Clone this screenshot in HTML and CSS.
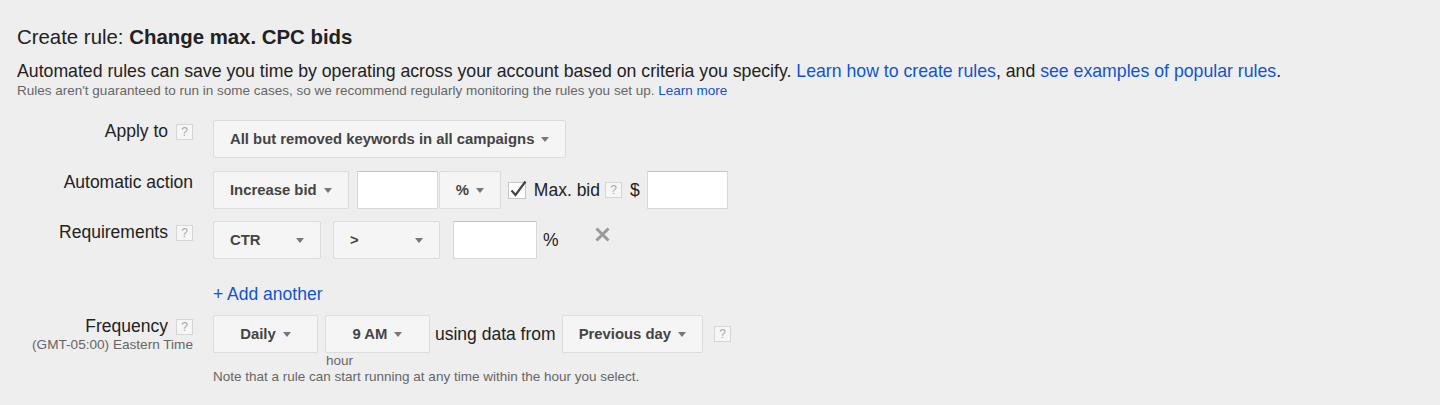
FILE: index.html
```html
<!DOCTYPE html>
<html lang="en">
<head>
<meta charset="utf-8">
<title>Create rule</title>
<link rel="stylesheet" href="styles.css">
</head>
<body>
<div class="page">
  <h1 class="title">Create rule: <b>Change max. CPC bids</b></h1>
  <p class="intro">Automated rules can save you time by operating across your account based on criteria you specify. <a href="#">Learn how to create rules</a>, and <a href="#">see examples of popular rules</a>.</p>
  <p class="note">Rules aren't guaranteed to run in some cases, so we recommend regularly monitoring the rules you set up. <a href="#">Learn more</a></p>

  <div class="form">
    <div class="row row-apply">
      <div class="label">Apply to<span class="help">?</span></div>
      <div class="controls">
        <div class="btn">All but removed keywords in all campaigns<span class="caret"></span></div>
      </div>
    </div>

    <div class="row row-action">
      <div class="label">Automatic action</div>
      <div class="controls">
        <div class="btn">Increase bid<span class="caret"></span></div>
        <div class="input w81 ml8"></div>
        <div class="btn ml1">%<span class="caret"></span></div>
        <svg class="check" width="20" height="20" viewBox="0 0 20 20">
          <rect x="0.5" y="2.5" width="17" height="16" fill="#fff" stroke="#c6c6c6"/>
          <path d="M3.5 10.5 L7.5 15 L17.5 1.5" fill="none" stroke="#444" stroke-width="2.2"/>
        </svg>
        <span class="txt maxbid">Max. bid</span><span class="help help-inline">?</span>
        <span class="txt dollar">$</span>
        <div class="input w81 ml7"></div>
      </div>
    </div>

    <div class="row row-req">
      <div class="label">Requirements<span class="help">?</span></div>
      <div class="controls">
        <div class="btn fixed w108">CTR<span class="caret"></span></div>
        <div class="btn fixed w107 ml12">&gt;<span class="caret"></span></div>
        <div class="input w84 ml13"></div>
        <span class="txt pct">%</span>
        <svg class="remove" width="15" height="15" viewBox="0 0 15 15">
          <path d="M1.5 1.5 L13.5 13.5 M13.5 1.5 L1.5 13.5" stroke="#9a9a9a" stroke-width="3"/>
        </svg>
      </div>
    </div>

    <div class="row row-add">
      <div class="label"></div>
      <div class="controls"><a href="#" class="add">+ Add another</a></div>
    </div>

    <div class="row row-freq">
      <div class="label">Frequency<span class="help">?</span><span class="tz">(GMT-05:00) Eastern Time</span></div>
      <div class="controls col">
        <div class="freq-line">
          <div class="btn center w105">Daily<span class="caret"></span></div>
          <div class="hour-col ml7">
            <div class="btn center w105">9 AM<span class="caret"></span></div>
            <span class="caption">hour</span>
          </div>
          <span class="txt using">using data from</span>
          <div class="btn ml6">Previous day<span class="caret"></span></div>
          <span class="help help-after">?</span>
        </div>
        <div class="caption">Note that a rule can start running at any time within the hour you select.</div>
      </div>
    </div>
  </div>
</div>
</body>
</html>
```

FILE: styles.css
```css
* { box-sizing: border-box; }

html, body {
  margin: 0;
  padding: 0;
  background: #eeeeee;
}

body {
  font-family: "Liberation Sans", Arial, sans-serif;
  color: #222;
}

.page {
  padding: 25px 0 0 0;
}

.title {
  margin: 0 0 0 17px;
  font-size: 20.4px;
  line-height: 24px;
  font-weight: normal;
  color: #222;
}

.title b { font-weight: bold; }

.intro {
  margin: 11px 0 0 17px;
  font-size: 17.7px;
  line-height: 22px;
  color: #222;
}

.note {
  margin: 1px 0 0 17px;
  font-size: 13.5px;
  line-height: 16px;
  color: #666;
}

a { color: #1155cc; text-decoration: none; }

.form {
  margin-top: 21px;
}

.row {
  display: flex;
  column-gap: 20px;
}

.row-action { margin-top: 13px; }
.row-req { margin-top: 12px; }
.row-add { margin-top: 24px; }
.row-freq { margin-top: 10px; }

.label {
  flex: 0 0 193px;
  text-align: right;
  font-size: 17.5px;
  line-height: 22px;
  color: #222;
}

.tz {
  display: block;
  font-size: 13.6px;
  line-height: 16px;
  color: #666;
}

.help {
  display: inline-block;
  width: 17px;
  height: 16px;
  margin-left: 8px;
  border: 1px solid #d6d6d6;
  background: #f6f6f6;
  color: #a8a8a8;
  font-size: 12px;
  line-height: 14px;
  text-align: center;
  vertical-align: 1px;
}

.controls {
  display: flex;
  align-items: center;
}

.controls.col {
  flex-direction: column;
  align-items: flex-start;
}

.freq-line {
  display: flex;
  align-items: flex-start;
}

.hour-col {
  display: flex;
  flex-direction: column;
}

.btn {
  height: 38px;
  display: inline-flex;
  align-items: center;
  padding: 0 16px;
  background: #f5f5f5;
  border: 1px solid #dcdcdc;
  border-radius: 2px;
  color: #444;
  font-weight: bold;
  font-size: 14.85px;
  white-space: nowrap;
}

.btn.fixed { justify-content: space-between; }
.btn.center { justify-content: center; padding: 0; }

.caret {
  display: inline-block;
  width: 0;
  height: 0;
  margin-left: 7px;
  border-left: 4.5px solid transparent;
  border-right: 4.5px solid transparent;
  border-top: 5px solid #777;
}

.input {
  height: 38px;
  background: #fff;
  border: 1px solid #d9d9d9;
  border-top-color: #c4c4c4;
  border-radius: 1px;
}

.w81 { width: 81px; }
.w84 { width: 84px; }
.w105 { width: 105px; }
.w107 { width: 107px; }
.w108 { width: 108px; }

.ml1 { margin-left: 1px; }
.ml6 { margin-left: 6px; }
.ml7 { margin-left: 7px; }
.ml8 { margin-left: 8px; }
.ml12 { margin-left: 12px; }
.ml13 { margin-left: 13px; }

.txt {
  font-size: 17.5px;
  color: #222;
}

.check { margin-left: 7px; margin-top: -1px; }
.maxbid { margin-left: 6px; }
.help-inline { margin-left: 5px; }
.dollar { margin-left: 8px; }
.pct { margin-left: 6px; }
.remove { margin-left: 36px; margin-top: -12px; }

.add {
  font-size: 17.5px;
  line-height: 22px;
}

.using {
  margin-left: 5px;
  line-height: 38px;
}

.help-after {
  margin-left: 11px;
  margin-top: 11px;
}

.caption {
  font-size: 13.5px;
  line-height: 16px;
  color: #666;
}

.hour-col .caption { padding-left: 1px; }
```
